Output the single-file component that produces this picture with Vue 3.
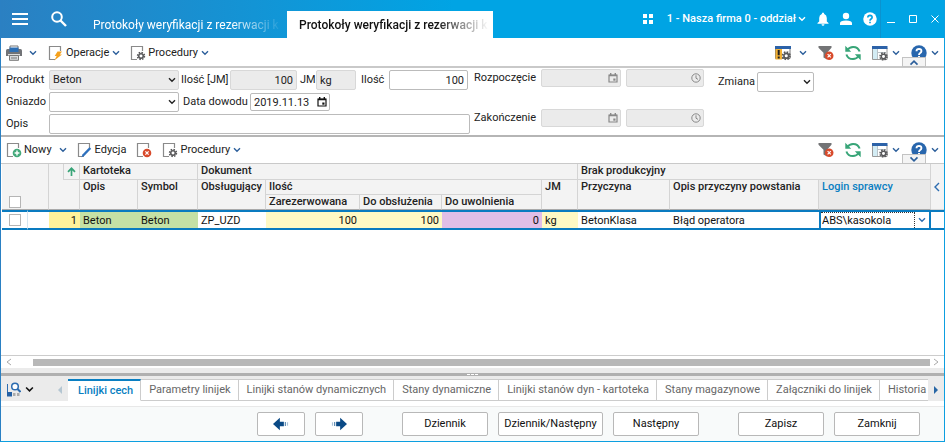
<template>
    <div class="window">
        <!-- Icon sprite -->
        <svg class="sprite" aria-hidden="true">
            <symbol id="chevron" viewBox="0 0 8 6">
                <path d="M1 1.2 4 4.2 7 1.2" fill="none" stroke="currentColor" stroke-width="1.4" />
            </symbol>
            <symbol id="doc" viewBox="0 0 16 16">
                <path d="M7 14.5H1.5V1.5H12.5V6" fill="none" stroke="#8a8a8a" stroke-width="1.2" />
            </symbol>
            <symbol id="gear" viewBox="0 0 10 10">
                <circle cx="5" cy="5" r="3.9" fill="none" stroke="#58585a" stroke-width="1.8" stroke-dasharray="1.7 1.36" />
                <circle cx="5" cy="5" r="2.5" fill="#fff" stroke="#58585a" stroke-width="1.7" />
            </symbol>
            <symbol id="print" viewBox="0 0 16 16">
                <path d="M4 1H12V4H4Z" fill="#fff" stroke="#777" />
                <path d="M0 5.5Q0 4 1.5 4H14.5Q16 4 16 5.5V11H0Z" fill="#717377" />
                <path d="M3.5 2.5H12.5V7H3.5Z" fill="#2d6fb5" />
                <path d="M2 9H14V10.5H2Z" fill="#ddd" />
                <path d="M3.5 10.5H12.5V15.3H3.5Z" fill="#d8dadd" stroke="#777" />
                <path d="M5 13H11" stroke="#777" />
            </symbol>
            <symbol id="operations" viewBox="0 0 16 16">
                <use href="#doc" />
                <path d="M9.5 6.5H14L11.8 9.4H14L6.3 15.5 8.7 11H6.7Z" fill="#f5a11c" />
            </symbol>
            <symbol id="procedures" viewBox="0 0 16 16">
                <use href="#doc" />
                <use href="#gear" x="6.5" y="6.5" width="9" height="9" />
            </symbol>
            <symbol id="add" viewBox="0 0 16 16">
                <use href="#doc" />
                <circle cx="11" cy="11" r="4.3" fill="#43a97a" />
                <path d="M8.6 11H13.4M11 8.6V13.4" stroke="#fff" stroke-width="1.4" />
            </symbol>
            <symbol id="edit" viewBox="0 0 16 16">
                <use href="#doc" />
                <path d="M12.4 5.3 14.2 6.8 7.2 14 4.5 15.3 5.4 12.4Z" fill="#2d70bd" />
            </symbol>
            <symbol id="remove" viewBox="0 0 16 16">
                <use href="#doc" />
                <circle cx="11" cy="11" r="4.3" fill="#d84a2b" />
                <path d="M9.4 9.4 12.6 12.6M12.6 9.4 9.4 12.6" stroke="#fff" stroke-width="1.3" />
            </symbol>
            <symbol id="alert-gear" viewBox="0 0 16 16">
                <path d="M0.5 3V13.5H15V3" fill="#fff" stroke="#777" />
                <path d="M0 1H16V4H0Z" fill="#2c62a8" />
                <path d="M0.5 4H7V14.5H0.5Z" fill="#f2b134" />
                <path d="M3.7 5V10.3M3.7 11.5V13.5" stroke="#222" stroke-width="2" />
                <use href="#gear" x="6.5" y="6" width="9.5" height="9.5" />
            </symbol>
            <symbol id="filter-clear" viewBox="0 0 16 16">
                <path d="M0.5 1H13.5V2.8L9 7.8V14.5L5.5 12.5V7.8L0.5 2.8Z" fill="#737476" />
                <circle cx="11.2" cy="10.8" r="4.3" fill="#d84a2b" />
                <path d="M9.6 9.2 12.8 12.4M12.8 9.2 9.6 12.4" stroke="#fff" stroke-width="1.2" />
            </symbol>
            <symbol id="refresh" viewBox="0 0 16 16">
                <path d="M14.6 6.5Q13 1.8 8 1.9Q4.5 2 2.2 5M1.4 9.5Q3 14.2 8 14.1Q11.5 14 13.8 11" fill="none" stroke="#38a578" stroke-width="2" />
                <path d="M0.3 0.8V6.7H6.2ZM15.7 15.2V9.3H9.8Z" fill="#38a578" />
            </symbol>
            <symbol id="layout-gear" viewBox="0 0 16 16">
                <path d="M0.5 3V14.5H15V3" fill="#fff" stroke="#999" />
                <path d="M1 4H5V14H1Z" fill="#d3ecf4" />
                <path d="M5.5 4V14M5 7.5H14" stroke="#b9c3c8" />
                <path d="M0 1H15.5V4H0Z" fill="#2c62a8" />
                <use href="#gear" x="7" y="7" width="9" height="9" />
            </symbol>
            <symbol id="help" viewBox="0 0 16 16">
                <circle cx="8" cy="8" r="7.7" fill="currentColor" />
                <path class="help-mark" d="M5.5 6.3Q5.6 3.9 8 3.9Q10.5 4 10.4 6.1Q10.3 7.3 9.2 8Q8 8.8 8 9.9M8 11V12.9" fill="none" stroke-width="1.9" />
            </symbol>
            <symbol id="calendar" viewBox="0 0 10 10">
                <path d="M1 2H9V9H1Z" fill="none" stroke="currentColor" stroke-width="1.2" />
                <path d="M1 2.5H9M2.7 0V2M7.3 0V2" stroke="currentColor" stroke-width="1.4" />
                <path d="M5.3 5.5H7.5V7.7H5.3Z" fill="currentColor" />
            </symbol>
            <symbol id="clock" viewBox="0 0 10 10">
                <circle cx="5" cy="5" r="4.2" fill="none" stroke="currentColor" />
                <path d="M5 2.3V5.2L7 6.4" fill="none" stroke="currentColor" />
            </symbol>
            <symbol id="arrow" viewBox="0 0 14 12">
                <path d="M0 6 6 0.5V4H9.5V8H6V11.5Z" fill="#0a4a86" />
                <path d="M10.3 4.2H11.3V7.8H10.3Z" fill="#5485b0" />
                <path d="M12.2 4.5H13.2V7.5H12.2Z" fill="#a9c2d8" />
            </symbol>
        </svg>

        <!-- Title bar -->
        <header class="titlebar">
            <button class="icon-btn menu-btn" aria-label="Menu">
                <svg width="16" height="12" viewBox="0 0 16 12"><path d="M0 1H16M0 6H16M0 11H16" stroke="#fff" stroke-width="2" /></svg>
            </button>
            <button class="icon-btn search-btn" aria-label="Szukaj">
                <svg width="16" height="16" viewBox="0 0 16 16">
                    <circle cx="6" cy="6" r="4.8" fill="none" stroke="#fff" stroke-width="2" />
                    <path d="M9.5 9.5 15 15" stroke="#fff" stroke-width="2.4" />
                </svg>
            </button>
            <nav class="window-tabs">
                <button v-for="n in 2" :key="n" class="window-tab" :class="{ active: activeWindow === n }" @click="activeWindow = n">
                    <span class="window-tab-text">Protokoły weryfikacji z rezerwacji k</span>
                </button>
            </nav>
            <div class="account">
                <svg width="10" height="10" viewBox="0 0 10 10"><path d="M0 0H4V4H0ZM6 0H10V4H6ZM0 6H4V10H0ZM6 6H10V10H6Z" fill="#fff" /></svg>
                <button class="icon-btn company">1 - Nasza firma 0 - oddział <svg class="chevron"><use href="#chevron" /></svg></button>
                <button class="icon-btn" aria-label="Powiadomienia">
                    <svg width="12" height="14" viewBox="0 0 12 14"><path d="M6 0.5Q7.2 0.5 7.2 2Q9.8 3 9.8 6V9.5L11.5 11V11.8H0.5V11L2.2 9.5V6Q2.2 3 4.8 2Q4.8 0.5 6 0.5ZM4.5 12.3H7.5Q7.4 13.8 6 13.8Q4.6 13.8 4.5 12.3Z" fill="#fff" /></svg>
                </button>
                <button class="icon-btn" aria-label="Użytkownik">
                    <svg width="12" height="14" viewBox="0 0 12 14"><circle cx="6" cy="4" r="3.2" fill="#fff" /><path d="M0 13V11.3Q0 8.5 6 8.5Q12 8.5 12 11.3V13Z" fill="#fff" /></svg>
                </button>
                <button class="icon-btn help-white" aria-label="Pomoc"><svg width="14" height="14"><use href="#help" /></svg></button>
            </div>
            <div class="window-controls">
                <button class="icon-btn" aria-label="Minimalizuj"><svg width="10" height="10" viewBox="0 0 10 10"><path d="M1 8.5H9" stroke="#fff" /></svg></button>
                <button class="icon-btn" aria-label="Maksymalizuj"><svg width="10" height="10" viewBox="0 0 10 10"><path d="M1.5 1.5H8.5V8.5H1.5Z" fill="none" stroke="#fff" /></svg></button>
                <button class="icon-btn" aria-label="Zamknij okno"><svg width="10" height="10" viewBox="0 0 10 10"><path d="M1.5 1.5 8.5 8.5M8.5 1.5 1.5 8.5" stroke="#fff" /></svg></button>
            </div>
        </header>

        <!-- Main toolbar -->
        <div class="toolbar main-toolbar">
            <button class="tool print-tool" aria-label="Drukuj"><svg class="icon"><use href="#print" /></svg><svg class="chevron"><use href="#chevron" /></svg></button>
            <button class="tool"><svg class="icon"><use href="#operations" /></svg>Operacje<svg class="chevron"><use href="#chevron" /></svg></button>
            <button class="tool"><svg class="icon"><use href="#procedures" /></svg>Procedury<svg class="chevron"><use href="#chevron" /></svg></button>
            <div class="toolbar-end">
                <button class="tool alert-tool" aria-label="Alerty"><svg class="icon"><use href="#alert-gear" /></svg><svg class="chevron"><use href="#chevron" /></svg></button>
                <button v-for="tool in endTools" :key="tool.icon" class="tool" :aria-label="tool.label">
                    <svg class="icon" :class="tool.icon"><use :href="'#' + tool.icon" /></svg>
                    <svg v-if="tool.menu" class="chevron"><use href="#chevron" /></svg>
                </button>
            </div>
            <button class="collapse up" aria-label="Zwiń"><svg width="10" height="7"><use href="#chevron" /></svg></button>
        </div>

        <!-- Protocol form -->
        <form class="form" @submit.prevent>
            <div class="form-main">
                <label for="product">Produkt</label>
                <div class="fields">
                    <span class="select-box wide"><select id="product" disabled><option>Beton</option></select><svg class="chevron"><use href="#chevron" /></svg></span>
                    <label class="label-jm" for="qty-jm">Ilość [JM]</label>
                    <input id="qty-jm" class="field number qty-jm" value="100" readonly>
                    <label class="label-unit" for="unit">JM</label>
                    <input id="unit" class="field unit" value="kg" readonly>
                    <label class="label-qty" for="qty">Ilość</label>
                    <input id="qty" v-model="qty" class="field number qty">
                </div>
                <label for="socket">Gniazdo</label>
                <div class="fields">
                    <span class="select-box wide"><select id="socket"><option></option></select><svg class="chevron"><use href="#chevron" /></svg></span>
                    <label class="label-date" for="doc-date">Data dowodu</label>
                    <span class="picker doc-date"><input id="doc-date" v-model="docDate" class="field"><svg><use href="#calendar" /></svg></span>
                </div>
                <label for="description">Opis</label>
                <div class="fields"><input id="description" v-model="description" class="field"></div>
            </div>
            <div class="form-times">
                <div v-for="time in times" :key="time.id" class="time-row">
                    <label :for="time.id">{{ time.label }}</label>
                    <span class="picker date"><input :id="time.id" class="field" disabled><svg><use href="#calendar" /></svg></span>
                    <span class="picker time"><input class="field" :aria-label="time.label + ' godzina'" disabled><svg><use href="#clock" /></svg></span>
                </div>
            </div>
            <div class="form-shift">
                <label for="shift">Zmiana</label>
                <span class="select-box narrow"><select id="shift"><option></option></select><svg class="chevron"><use href="#chevron" /></svg></span>
            </div>
        </form>

        <!-- Lines toolbar -->
        <div class="toolbar lines-toolbar">
            <button class="tool new-tool"><svg class="icon"><use href="#add" /></svg>Nowy<svg class="chevron"><use href="#chevron" /></svg></button>
            <button class="tool"><svg class="icon"><use href="#edit" /></svg>Edycja</button>
            <button class="tool" aria-label="Usuń"><svg class="icon"><use href="#remove" /></svg></button>
            <button class="tool"><svg class="icon"><use href="#procedures" /></svg>Procedury<svg class="chevron"><use href="#chevron" /></svg></button>
            <div class="toolbar-end">
                <button v-for="tool in endTools" :key="tool.icon" class="tool" :aria-label="tool.label">
                    <svg class="icon" :class="tool.icon"><use :href="'#' + tool.icon" /></svg>
                    <svg v-if="tool.menu" class="chevron"><use href="#chevron" /></svg>
                </button>
            </div>
            <button class="collapse" aria-label="Rozwiń"><svg width="10" height="7"><use href="#chevron" /></svg></button>
        </div>

        <!-- Lines grid -->
        <div class="grid">
            <table>
                <colgroup>
                    <col v-for="(width, i) in columns" :key="i" :style="{ width: width + 'px' }">
                    <col>
                </colgroup>
                <thead>
                    <tr>
                        <th colspan="2" rowspan="3" class="check-head"><input v-model="allChecked" type="checkbox" aria-label="Zaznacz wszystkie"></th>
                        <th class="no-line"></th>
                        <th class="sort">
                            <svg width="9" height="9" viewBox="0 0 9 9"><path d="M4.5 9V1.5M1 4.8 4.5 1.3 8 4.8" fill="none" stroke="#37a477" stroke-width="1.7" /></svg>
                        </th>
                        <th colspan="2">Kartoteka</th>
                        <th colspan="5">Dokument</th>
                        <th colspan="3">Brak produkcyjny</th>
                        <th rowspan="3" class="expand"><svg width="6" height="10" viewBox="0 0 6 10"><path d="M5 1 1 5 5 9" fill="none" stroke="#2c6cb0" stroke-width="1.4" /></svg></th>
                    </tr>
                    <tr>
                        <th colspan="2" rowspan="2"></th>
                        <th rowspan="2">Opis</th>
                        <th rowspan="2">Symbol</th>
                        <th rowspan="2">Obsługujący</th>
                        <th colspan="3">Ilość</th>
                        <th rowspan="2">JM</th>
                        <th rowspan="2">Przyczyna</th>
                        <th rowspan="2">Opis przyczyny powstania</th>
                        <th rowspan="2" class="current">Login sprawcy</th>
                    </tr>
                    <tr>
                        <th>Zarezerwowana</th>
                        <th>Do obsłużenia</th>
                        <th>Do uwolnienia</th>
                    </tr>
                </thead>
                <tbody>
                    <tr v-for="row in rows" :key="row.no">
                        <td class="check-cell"><input v-model="row.checked" type="checkbox" aria-label="Zaznacz wiersz"></td>
                        <td></td>
                        <td colspan="2" class="number row-no">{{ row.no }}</td>
                        <td class="green">{{ row.name }}</td>
                        <td class="green">{{ row.symbol }}</td>
                        <td>{{ row.operator }}</td>
                        <td class="number yellow">{{ row.reserved }}</td>
                        <td class="number yellow">{{ row.toHandle }}</td>
                        <td class="number violet">{{ row.toRelease }}</td>
                        <td class="yellow">{{ row.unit }}</td>
                        <td>{{ row.reason }}</td>
                        <td>{{ row.reasonDesc }}</td>
                        <td class="editor">
                            <div class="editor-box">
                                <input v-model="row.login" aria-label="Login sprawcy">
                                <button aria-label="Wybierz"><svg class="chevron"><use href="#chevron" /></svg></button>
                            </div>
                        </td>
                        <td></td>
                    </tr>
                </tbody>
            </table>
        </div>

        <div class="scrollbar">
            <svg width="6" height="8" viewBox="0 0 6 8"><path d="M5 1 1 4 5 7" fill="none" stroke="#aaa" /></svg>
            <div class="thumb"></div>
            <svg width="6" height="8" viewBox="0 0 6 8"><path d="M1 1 5 4 1 7" fill="none" stroke="#aaa" /></svg>
        </div>
        <div class="splitter"><div class="splitter-bar"><i></i><i></i><i></i></div></div>

        <!-- Bottom tabs -->
        <div class="tabs-row">
            <button class="icon-btn view-btn" aria-label="Widok">
                <svg width="14" height="15" viewBox="0 0 14 15">
                    <path d="M0.5 2V14" stroke="#2c6cb0" />
                    <path d="M0 10H5V14.5H0Z" fill="#2360a5" />
                    <path d="M6 11H8.5V14H6ZM10 11H12.5V14H10Z" fill="#aaa" />
                    <circle cx="8" cy="4.5" r="3.3" fill="#fff" stroke="#2c6cb0" stroke-width="1.5" />
                    <path d="M10.5 7 13.5 10" stroke="#2c6cb0" stroke-width="2" />
                </svg>
                <svg class="chevron dark"><use href="#chevron" /></svg>
            </button>
            <button class="icon-btn scroll-left" aria-label="W lewo"><svg width="4" height="8" viewBox="0 0 4 8"><path d="M4 0V8L0 4Z" fill="#b4c6d2" /></svg></button>
            <div class="tabs">
                <button v-for="tab in tabs" :key="tab" class="tab" :class="{ active: activeTab === tab }" @click="activeTab = tab">{{ tab }}</button>
            </div>
            <button class="icon-btn scroll-right" aria-label="W prawo"><svg width="4" height="8" viewBox="0 0 4 8"><path d="M0 0V8L4 4Z" fill="#2766a5" /></svg></button>
        </div>

        <!-- Actions -->
        <footer class="footer">
            <div class="group">
                <button class="btn arrow-btn" aria-label="Wstecz"><svg width="16" height="14"><use href="#arrow" /></svg></button>
                <button class="btn arrow-btn" aria-label="Dalej"><svg class="flip" width="16" height="14"><use href="#arrow" /></svg></button>
            </div>
            <div class="group">
                <button class="btn">Dziennik</button>
                <button class="btn wide-btn">Dziennik/Następny</button>
                <button class="btn">Następny</button>
            </div>
            <div class="group">
                <button class="btn">Zapisz</button>
                <button class="btn">Zamknij</button>
            </div>
        </footer>
    </div>
</template>

<script setup>
import { ref } from 'vue'

const activeWindow = ref(2)
const qty = ref('100')
const docDate = ref('2019.11.13')
const description = ref('')
const allChecked = ref(false)

const endTools = [
    { icon: 'filter-clear', label: 'Wyczyść filtr' },
    { icon: 'refresh', label: 'Odśwież' },
    { icon: 'layout-gear', label: 'Układ', menu: true },
    { icon: 'help', label: 'Pomoc', menu: true }
]

const times = [
    { id: 'start', label: 'Rozpoczęcie' },
    { id: 'end', label: 'Zakończenie' }
]

const columns = [26, 21, 15, 16, 58, 60, 68, 94, 82, 100, 36, 92, 149, 112]

const rows = ref([
    {
        no: 1,
        checked: false,
        name: 'Beton',
        symbol: 'Beton',
        operator: 'ZP_UZD',
        reserved: 100,
        toHandle: 100,
        toRelease: 0,
        unit: 'kg',
        reason: 'BetonKlasa',
        reasonDesc: 'Błąd operatora',
        login: 'ABS\\kasokola'
    }
])

const tabs = [
    'Linijki cech',
    'Parametry linijek',
    'Linijki stanów dynamicznych',
    'Stany dynamiczne',
    'Linijki stanów dyn - kartoteka',
    'Stany magazynowe',
    'Załączniki do linijek',
    'Historia'
]
const activeTab = ref(tabs[0])
</script>

<style>
body {
    margin: 0;
}
</style>

<style scoped>
.window {
    display: flex;
    flex-direction: column;
    min-height: 100vh;
    box-sizing: border-box;
    border: 1px solid #0d9fe0;
    border-top: 0;
    border-left-color: #2a80c3;
    font-family: Roboto, "Liberation Sans", sans-serif;
    font-size: 11px;
    line-height: 14px;
    color: #222;
    background: #fff;
}

.window * {
    box-sizing: border-box;
}

button,
input,
select {
    font: inherit;
    color: inherit;
    margin: 0;
}

svg {
    display: block;
    flex: none;
}

.sprite {
    position: absolute;
    width: 0;
    height: 0;
}

.chevron {
    width: 8px;
    height: 6px;
}

.icon {
    width: 16px;
    height: 16px;
}

.icon-btn {
    display: flex;
    align-items: center;
    padding: 0;
    border: 0;
    background: none;
}

/* Title bar */
.titlebar {
    display: flex;
    height: 38px;
    background: linear-gradient(90deg, #2b80c2, #00a4e4 48%);
    color: #fff;
}

.menu-btn {
    margin-left: 11px;
}

.search-btn {
    margin-left: 23px;
}

.window-tabs {
    display: flex;
    align-items: flex-end;
    margin-left: 14px;
}

.window-tab {
    width: 206px;
    height: 27px;
    padding: 0 4px 0 12px;
    border: 0;
    background: none;
    font-size: 12px;
    text-align: left;
}

.window-tab.active {
    background: #fff;
    color: #111;
    font-weight: 500;
}

.window-tab-text {
    display: block;
    white-space: nowrap;
    mask-image: linear-gradient(90deg, #000 72%, transparent);
}

.account {
    display: flex;
    align-items: center;
    gap: 11px;
    margin-left: auto;
    padding-right: 3px;
}

.company {
    gap: 2px;
    font-weight: 500;
    margin-left: 3px;
    white-space: nowrap;
}

.help-white {
    --mark: #00a4e4;
}

.help-mark {
    stroke: var(--mark, #fff);
}

.window-controls {
    display: flex;
    align-items: center;
    gap: 12px;
    padding: 0 4px 0 5px;
    border-left: 1px solid #0b93cf;
}

/* Toolbars */
.toolbar {
    position: relative;
    display: flex;
    align-items: center;
    gap: 10px;
    height: 30px;
    padding: 0 5px;
    border-bottom: 2px solid #c9c9c9;
}

.main-toolbar {
    padding-top: 2px;
}

.tool {
    display: flex;
    align-items: center;
    gap: 2px;
    padding: 0;
    border: 0;
    background: none;
}

.tool .chevron,
.collapse {
    color: #2c5f9b;
}

.tool > .chevron {
    margin-left: 1px;
}

.print-tool {
    gap: 6px;
    margin-right: 1px;
}

.toolbar-end {
    display: flex;
    gap: 11px;
    margin-left: auto;
}

.toolbar-end .tool {
    gap: 3px;
}

.toolbar-end .alert-tool {
    gap: 7px;
}

.icon.help {
    color: #2866ad;
}

.collapse {
    position: absolute;
    right: 18px;
    bottom: -1px;
    display: flex;
    align-items: center;
    justify-content: center;
    width: 24px;
    height: 10px;
    padding: 0;
    border: 1px solid #c3c3c3;
    background: #f4f4f4;
}

.collapse.up svg {
    transform: rotate(180deg);
}

.lines-toolbar {
    height: 29px;
    border-bottom-width: 1px;
    border-top: 2px solid #b5b5b5;
}

.new-tool .chevron {
    margin-left: 5px;
}

/* Form */
.form {
    display: flex;
    padding-top: 1px;
}

.form-main {
    display: grid;
    grid-template-columns: 43px 421px;
    grid-template-rows: 22px 22px 22px;
    align-items: center;
    padding-left: 5px;
}

.fields {
    display: flex;
    align-items: center;
}

.field,
select {
    width: 100%;
    height: 20px;
    padding: 0 3px;
    border: 1px solid #bbb;
    border-radius: 2px;
    background: #fff;
    color: #222;
    opacity: 1;
    appearance: none;
}

.field:read-only,
.field:disabled,
select:disabled {
    background: #ebebeb;
    border-color: #d8d8d8;
}

.select-box,
.picker {
    position: relative;
    display: block;
    flex: none;
}

.select-box .chevron {
    position: absolute;
    right: 3px;
    top: 7px;
    pointer-events: none;
}

.wide {
    width: 130px;
}

.narrow {
    width: 57px;
}

.number {
    text-align: right;
}

.label-jm {
    width: 49px;
    margin-left: 2px;
    white-space: nowrap;
}

.qty-jm {
    width: 67px;
}

.label-unit {
    width: 16px;
    margin-left: 3px;
}

.unit {
    width: 40px;
}

.label-qty {
    width: 28px;
    margin-left: 5px;
}

.qty {
    width: 79px;
}

.label-date {
    width: 67px;
    margin-left: 4px;
}

.picker svg {
    position: absolute;
    right: 3px;
    top: 4px;
    width: 10px;
    height: 10px;
    color: #888;
}

.doc-date {
    width: 80px;
}

.doc-date svg {
    color: #111;
}

.doc-date .field {
    height: 18px;
}

.form-times {
    display: flex;
    flex-direction: column;
    gap: 22px;
    padding-left: 4px;
}

.time-row {
    display: flex;
    align-items: center;
}

.time-row label {
    width: 67px;
}

.time-row .field {
    height: 18px;
}

.date {
    width: 80px;
    margin-right: 5px;
}

.time {
    width: 78px;
}

.form-shift {
    display: flex;
    align-items: center;
    align-self: flex-start;
    padding-top: 3px;
    margin-left: 14px;
}

.form-shift label {
    width: 39px;
}

/* Grid */
.grid {
    flex: 1;
    padding-left: 1px;
    border-bottom: 1px solid #ccc;
}

table {
    width: 100%;
    table-layout: fixed;
    border-collapse: separate;
    border-spacing: 0;
}

th {
    height: 15px;
    padding: 0 3px;
    border-right: 1px solid #d4d4d4;
    border-bottom: 1px solid #d4d4d4;
    background: #f3f3f3;
    font-weight: 500;
    text-align: left;
    vertical-align: top;
    white-space: nowrap;
    color: #222;
}

th[rowspan="2"],
thead tr:last-child th,
.check-head {
    border-bottom-color: #aaa;
}

.no-line {
    border-bottom: 0;
}

.sort {
    padding: 3px;
}

th.current {
    background: #e9e9e9;
    color: #0a7fc2;
}

th.check-head {
    vertical-align: bottom;
}

th.expand {
    vertical-align: middle;
    border-right: 0;
}

input[type="checkbox"] {
    display: block;
    width: 12px;
    height: 12px;
    margin: 0 0 1px 4px;
    border: 1px solid #b5b5b5;
    background: #fff;
    appearance: none;
}

input[type="checkbox"]:checked {
    background: #0a7fc2;
}

td {
    height: 20px;
    padding: 1px 3px 0;
    border-top: 2px solid #0a7bc0;
    border-bottom: 2px solid #0a7bc0;
    white-space: nowrap;
    color: #111;
}

td.check-cell {
    border-right: 1px solid #d5e5ef;
}

.row-no {
    background: #fff29b;
}

.green {
    background: #c5e1a5;
}

.yellow {
    background: #fff9c4;
}

.violet {
    background: #e1bee7;
}

td.editor {
    padding: 0;
    border-left: 2px solid #0a7bc0;
    border-right: 2px solid #0a7bc0;
}

.editor-box {
    display: flex;
    height: 16px;
}

.editor-box input {
    flex: 1;
    min-width: 0;
    padding: 0 1px;
    border: 0;
    border-top: 1px dotted #333;
    border-right: 1px dotted #333;
    outline: 0;
}

.editor-box button {
    padding: 0 3px;
    border: 0;
    background: #fff;
    color: #2c6cb0;
}

/* Scrollbar and splitter */
.scrollbar {
    display: flex;
    align-items: center;
    height: 12px;
    padding: 0 5px;
}

.thumb {
    flex: 1;
    height: 7px;
    margin: 0 3px 0 21px;
    background: #b8b8b8;
}

.splitter {
    height: 10px;
    padding-top: 5px;
    background: #ebebeb;
}

.splitter-bar {
    display: flex;
    justify-content: center;
    gap: 1px;
    height: 3px;
    padding-top: 1px;
    background: #b0b0b0;
}

.splitter-bar i {
    width: 3px;
    height: 1px;
    background: #fff;
}

/* Bottom tabs */
.tabs-row {
    display: flex;
    align-items: center;
    height: 23px;
    background: #ebebeb;
}

.view-btn {
    gap: 4px;
    padding-left: 6px;
    color: #111;
}

.chevron.dark {
    width: 9px;
    height: 7px;
}

.scroll-left {
    margin-left: 24px;
}

.tabs {
    display: flex;
    flex: 1;
    min-width: 0;
    height: 100%;
    margin-left: 6px;
    padding-top: 1px;
    overflow: hidden;
}

.tab {
    flex: none;
    height: 22px;
    padding: 0 7px 0 8px;
    border: 1px solid #ccc;
    border-left: 0;
    background: #fff;
    color: #666;
    white-space: nowrap;
}

.tab.active {
    padding: 0 7px 0 10px;
    border-top: 2px solid #0a7fc2;
    border-bottom-color: #fff;
    color: #0a7fc2;
    font-weight: 500;
}

.scroll-right {
    padding: 0 6px;
}

/* Footer */
.footer {
    display: flex;
    flex-wrap: wrap;
    justify-content: flex-end;
    gap: 6px 39px;
    margin-top: 5px;
    padding: 5px 24px 5px 0;
    border-top: 1px solid #e8e8e8;
    background: #f8fafa;
}

.group {
    display: flex;
    gap: 10px;
}

.btn {
    display: flex;
    align-items: center;
    justify-content: center;
    width: 86px;
    height: 24px;
    padding: 0;
    border: 1px solid #b8b8b8;
    border-radius: 2px;
    background: #fff;
    color: #111;
}

.arrow-btn {
    width: 48px;
}

.wide-btn {
    width: 105px;
}

.flip {
    transform: rotate(180deg);
}
</style>
